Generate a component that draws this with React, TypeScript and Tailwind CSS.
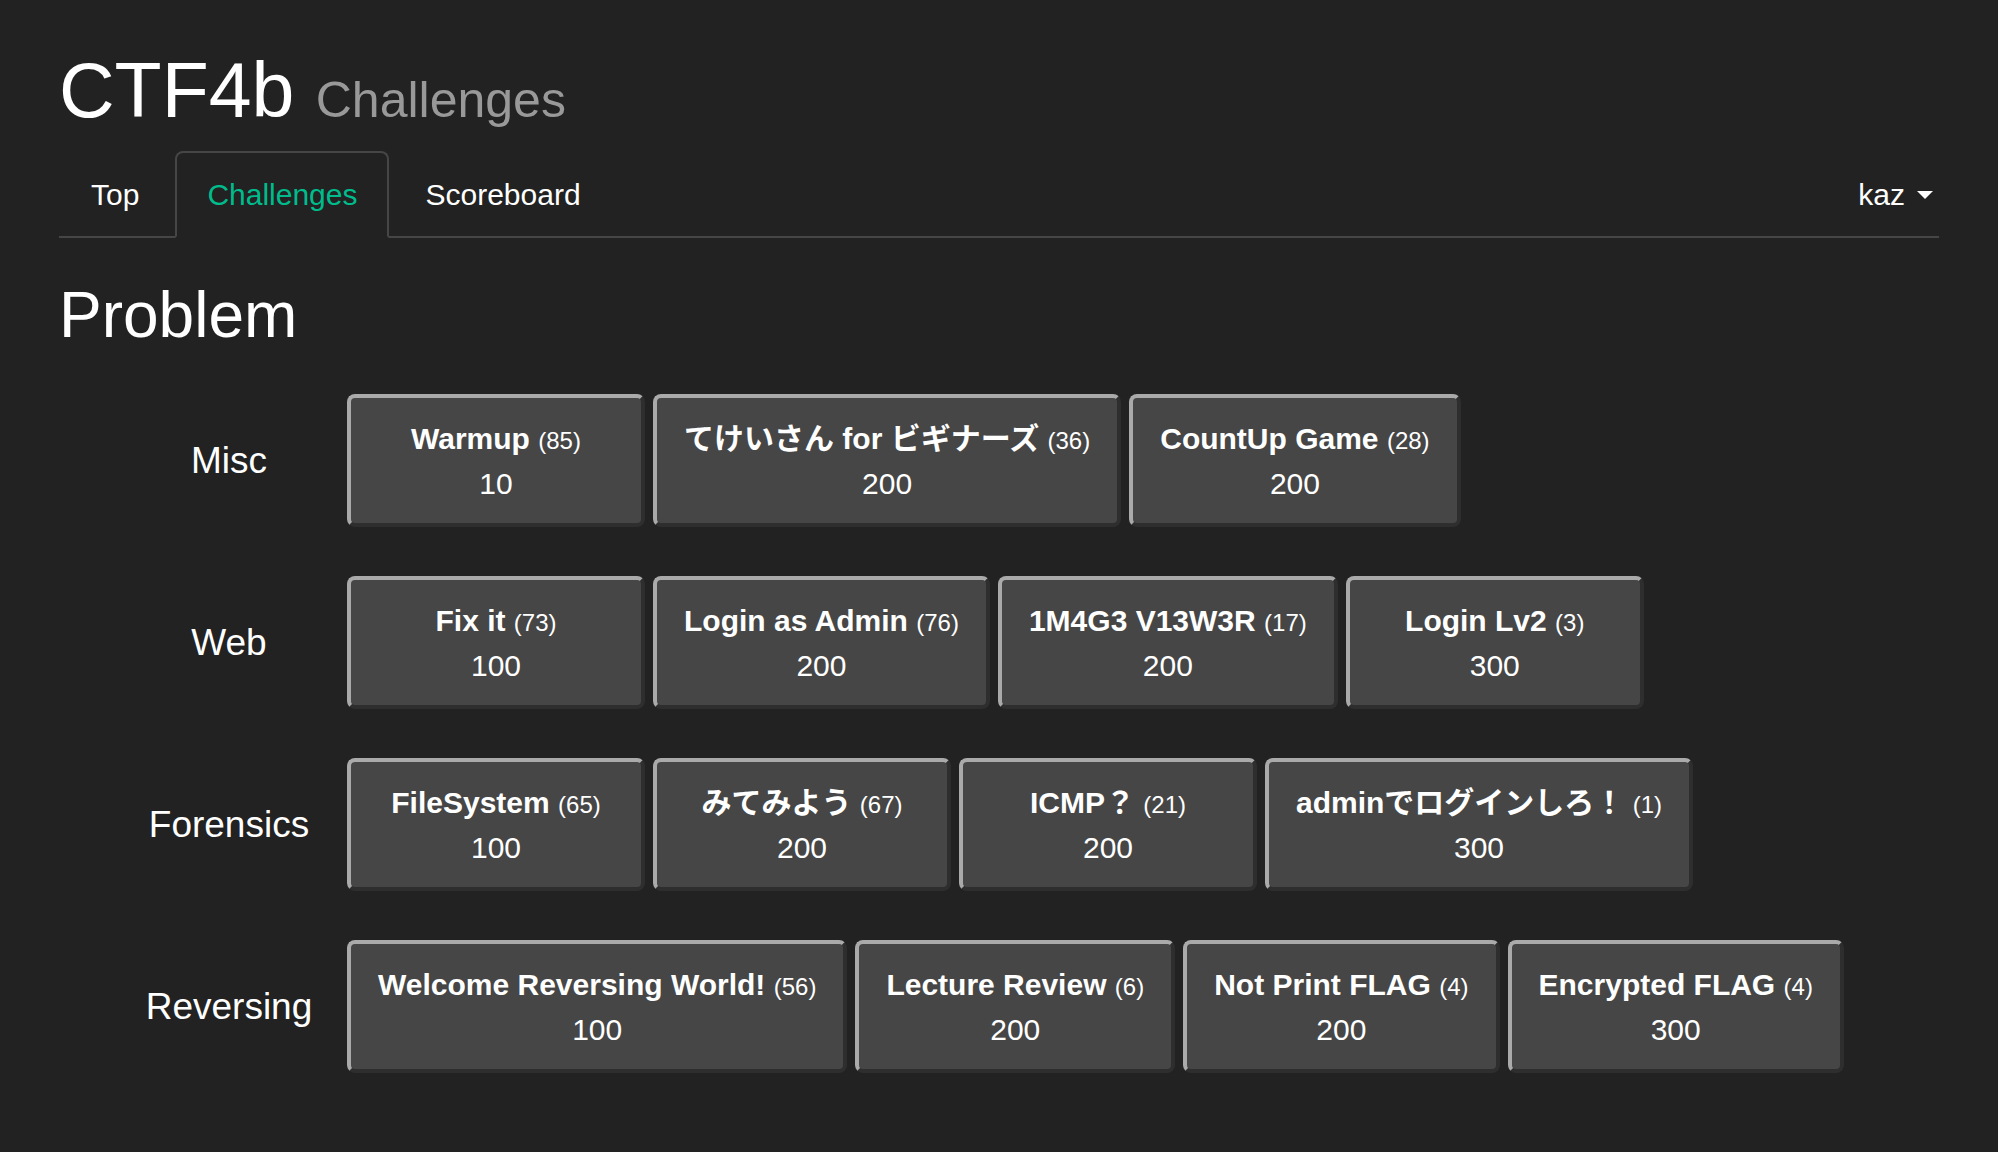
import React from "react";

type Chal = { name: string; solves: number; points: number };

const rows: { cat: string; items: Chal[] }[] = [
  {
    cat: "Misc",
    items: [
      { name: "Warmup", solves: 85, points: 10 },
      { name: "てけいさん for ビギナーズ", solves: 36, points: 200 },
      { name: "CountUp Game", solves: 28, points: 200 },
    ],
  },
  {
    cat: "Web",
    items: [
      { name: "Fix it", solves: 73, points: 100 },
      { name: "Login as Admin", solves: 76, points: 200 },
      { name: "1M4G3 V13W3R", solves: 17, points: 200 },
      { name: "Login Lv2", solves: 3, points: 300 },
    ],
  },
  {
    cat: "Forensics",
    items: [
      { name: "FileSystem", solves: 65, points: 100 },
      { name: "みてみよう", solves: 67, points: 200 },
      { name: "ICMP？", solves: 21, points: 200 },
      { name: "adminでログインしろ！", solves: 1, points: 300 },
    ],
  },
  {
    cat: "Reversing",
    items: [
      { name: "Welcome Reversing World!", solves: 56, points: 100 },
      { name: "Lecture Review", solves: 6, points: 200 },
      { name: "Not Print FLAG", solves: 4, points: 200 },
      { name: "Encrypted FLAG", solves: 4, points: 300 },
    ],
  },
];

function ChalButton({ c }: { c: Chal }) {
  return (
    <div className="min-w-[298px] h-[133px] px-[27px] flex flex-col items-center justify-center bg-[#464646] border-[4px] border-t-[#aaaaaa] border-l-[#aaaaaa] border-b-[#2e2e2e] border-r-[#2e2e2e] rounded-[8px] text-white text-center leading-[43px]">
      <div className="whitespace-nowrap text-[30px]">
        <span className="font-bold">{c.name}</span>{" "}
        <span className="text-[24px]">({c.solves})</span>
      </div>
      <div className="text-[30px]">{c.points}</div>
    </div>
  );
}

export default function App() {
  return (
    <div
      className="min-h-[1152px] w-full bg-[#222222] text-white"
      style={{ fontFamily: '"Liberation Sans", "Noto Sans CJK JP", Arial, sans-serif' }}
    >
      <div className="w-[1880px] mx-auto">
        <h1 className="pt-[47px] text-[77px] leading-[86px] font-normal whitespace-nowrap">
          CTF4b <span className="text-[50px] text-[#999999]">Challenges</span>
        </h1>

        <div className="mt-[8px] flex items-end justify-between border-b-[2px] border-[#464646]">
          <div className="flex text-[30px] leading-[43px]">
            <div className="mb-[-2px] mr-[4px] px-[30px] py-[20px] border-[2px] border-transparent text-white">Top</div>
            <div className="mb-[-2px] mr-[4px] px-[30px] py-[20px] border-[2px] border-[#464646] border-b-[#222222] rounded-t-[8px] bg-[#222222] text-[#00bc8c]">
              Challenges
            </div>
            <div className="mb-[-2px] mr-[4px] px-[30px] py-[20px] border-[2px] border-transparent text-white">Scoreboard</div>
          </div>
          <div className="flex items-center pr-[6px] py-[20px] text-[30px] leading-[43px]">
            <span>kaz</span>
            <span className="ml-[12px] w-0 h-0 border-l-[8px] border-r-[8px] border-t-[8px] border-l-transparent border-r-transparent border-t-white" />
          </div>
        </div>

        <h2 className="mt-[42px] text-[64px] leading-[70px] font-normal">Problem</h2>

        <div className="mt-[44px] flex flex-col gap-[49px]">
          {rows.map((r) => (
            <div key={r.cat} className="flex items-center">
              <div className="w-[288px] shrink-0 pl-[52px] text-center text-[37px]">{r.cat}</div>
              <div className="flex gap-[8px]">
                {r.items.map((c) => (
                  <ChalButton key={c.name} c={c} />
                ))}
              </div>
            </div>
          ))}
        </div>
      </div>
    </div>
  );
}
